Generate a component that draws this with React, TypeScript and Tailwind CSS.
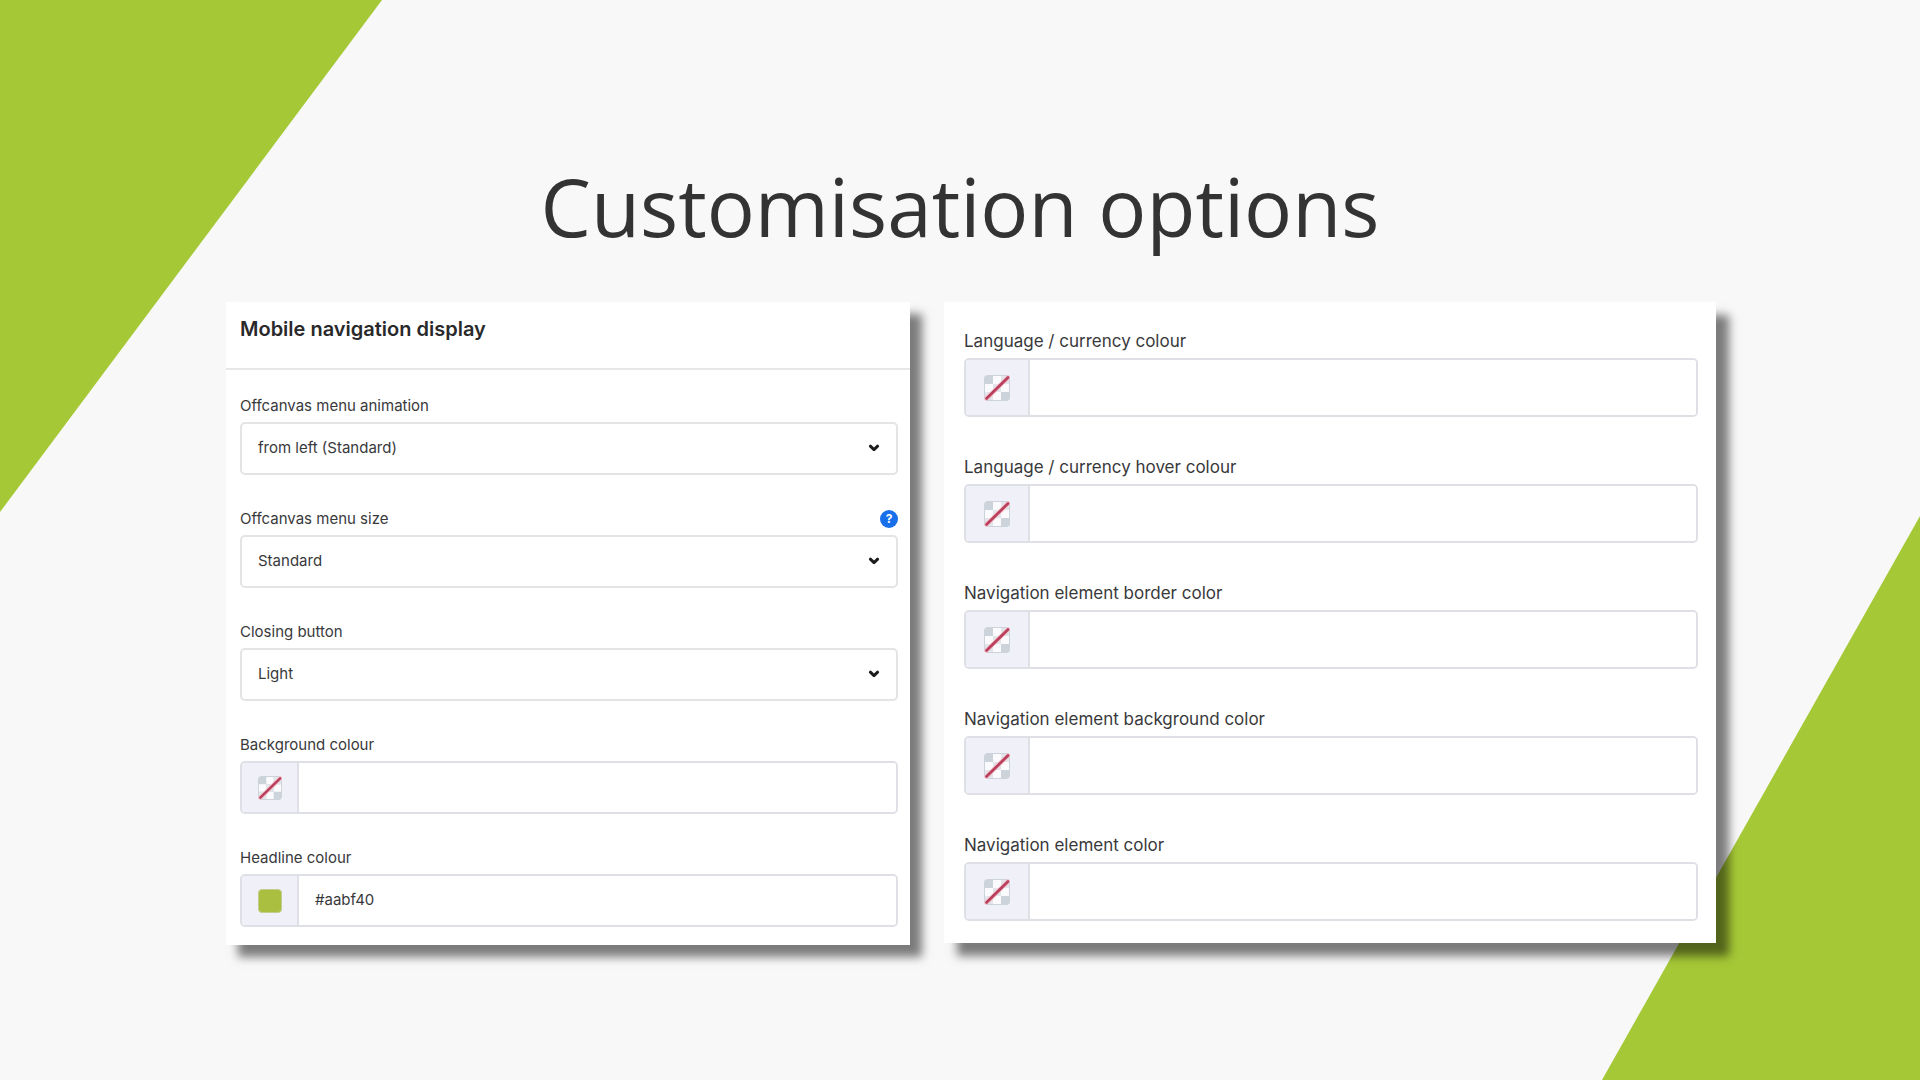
import { useState } from "react";

interface SelectFieldProps {
  id: string;
  label: string;
  options: string[];
  hasHelp?: boolean;
}

interface ColorFieldProps {
  id: string;
  label: string;
  initial?: string;
  size: "md" | "lg";
}

const SELECT_FIELDS: SelectFieldProps[] = [
  {
    id: "menu-animation",
    label: "Offcanvas menu animation",
    options: ["from left (Standard)", "from right"],
  },
  {
    id: "menu-size",
    label: "Offcanvas menu size",
    options: ["Standard", "Full width"],
    hasHelp: true,
  },
  { id: "closing-button", label: "Closing button", options: ["Light", "Dark"] },
];

const NAVIGATION_COLORS = [
  { id: "language-color", label: "Language / currency colour" },
  { id: "language-hover-color", label: "Language / currency hover colour" },
  { id: "nav-border-color", label: "Navigation element border color" },
  { id: "nav-background-color", label: "Navigation element background color" },
  { id: "nav-color", label: "Navigation element color" },
];

function Chevron() {
  return (
    <svg
      viewBox="0 0 12 8"
      className="pointer-events-none absolute right-[18px] top-[22px] h-2 w-3"
      fill="none"
      stroke="#1c1c1e"
      strokeWidth="3"
      strokeLinecap="round"
      strokeLinejoin="round"
    >
      <path d="M2.4 2.2 6 5.6l3.6-3.4" />
    </svg>
  );
}

function EmptySwatch({ className }: { className: string }) {
  return (
    <svg viewBox="0 0 26 26" className={className}>
      <rect width="26" height="26" rx="4" fill="#cdd3da" />
      <path
        d="M9 1h8v8H9zM1 9h8v8H1zM17 9h8v8h-8zM9 17h8v8H9z"
        fill="#fbfbfd"
      />
      <path
        d="M17 1h5a3 3 0 0 1 3 3v5h-8zM9 9h8v8H9zM1 17h8v8H4a3 3 0 0 1-3-3z"
        fill="#e2e5ea"
      />
      <path
        d="M2.5 23.5 24 2.5"
        stroke="#f3bcc8"
        strokeWidth="4.4"
        strokeLinecap="round"
      />
      <path
        d="M2.5 23.5 24 2.5"
        stroke="#b9405c"
        strokeWidth="2.6"
        strokeLinecap="round"
      />
    </svg>
  );
}

function SelectField({ id, label, options, hasHelp }: SelectFieldProps) {
  const [value, setValue] = useState(options[0]);

  return (
    <div>
      <div className="mb-1.5 flex h-5 items-center justify-between">
        <label htmlFor={id} className="text-[15px] leading-5">
          {label}
        </label>
        {hasHelp && (
          <button
            type="button"
            aria-label="Help"
            className="flex size-[18px] items-center justify-center rounded-full bg-[#176fea] text-[12px] font-bold leading-none text-white"
          >
            ?
          </button>
        )}
      </div>
      <div className="relative">
        <select
          id={id}
          value={value}
          onChange={(e) => setValue(e.target.value)}
          className="h-[53px] w-full appearance-none rounded-[5px] border-2 border-[#e3e4e6] bg-white px-4 text-[15px] outline-none focus:border-[#176fea]"
        >
          {options.map((option) => (
            <option key={option}>{option}</option>
          ))}
        </select>
        <Chevron />
      </div>
    </div>
  );
}

function ColorField({ id, label, initial = "", size }: ColorFieldProps) {
  const [value, setValue] = useState(initial);
  const isLarge = size === "lg";

  return (
    <div>
      <label
        htmlFor={id}
        className={`block leading-5 ${isLarge ? "mb-[7px] text-[17px]" : "mb-1.5 text-[15px]"}`}
      >
        {label}
      </label>
      <div
        className={`flex overflow-hidden rounded-[5px] border-2 border-[#dfe0e5] ${isLarge ? "h-[59px]" : "h-[53px]"}`}
      >
        <button
          type="button"
          aria-label={`Pick ${label}`}
          className={`flex shrink-0 items-center justify-center border-r-2 border-[#dfe0e5] bg-[#f0f1f8] ${isLarge ? "w-16" : "w-[57px]"}`}
        >
          {value ? (
            <span
              className="size-6 rounded-[4px] border border-[#c2cc8c]"
              style={{ backgroundColor: value }}
            />
          ) : (
            <EmptySwatch className={isLarge ? "size-[26px]" : "size-6"} />
          )}
        </button>
        <input
          id={id}
          type="text"
          value={value}
          onChange={(e) => setValue(e.target.value)}
          className="min-w-0 flex-1 bg-white px-4 text-[15px] outline-none"
        />
      </div>
    </div>
  );
}

export default function App() {
  return (
    <div className="relative min-h-screen overflow-hidden bg-[#f8f8f8]">
      <svg
        className="absolute left-0 top-0 h-[512px] w-[382px]"
        viewBox="0 0 382 512"
        aria-hidden="true"
      >
        <path d="M0 0h382L0 512z" fill="#a5c836" />
      </svg>
      <svg
        className="absolute bottom-0 right-0 h-[564px] w-[318px]"
        viewBox="0 0 318 564"
        aria-hidden="true"
      >
        <path d="M318 0v564H0z" fill="#a5c836" />
      </svg>

      <main className="relative pb-32 pl-[226px] pr-[204px] pt-[146px] font-['Inter',sans-serif] text-[#39393b]">
        <h1 className="-ml-[22px] mb-9 text-center font-['Open_Sans',sans-serif] text-[80px] leading-[120px] text-[#333333]">
          Customisation options
        </h1>

        <div className="grid grid-cols-[684fr_772fr] items-start gap-[34px]">
          <section className="bg-white shadow-[12px_12px_9px_rgba(0,0,0,0.5)]">
            <h2 className="border-b-2 border-[#e6e7e9] px-3.5 pb-[27px] pt-[15px] text-[20px] font-semibold leading-6 text-[#29292b]">
              Mobile navigation display
            </h2>
            <div className="flex flex-col gap-[34px] pb-[18px] pl-3.5 pr-3 pt-[26px]">
              {SELECT_FIELDS.map((field) => (
                <SelectField key={field.id} {...field} />
              ))}
              <ColorField
                id="background-color"
                label="Background colour"
                size="md"
              />
              <ColorField
                id="headline-color"
                label="Headline colour"
                initial="#aabf40"
                size="md"
              />
            </div>
          </section>

          <section className="flex flex-col gap-10 bg-white pb-[22px] pl-5 pr-[18px] pt-[29px] shadow-[13px_13px_9px_rgba(0,0,0,0.5)]">
            {NAVIGATION_COLORS.map((field) => (
              <ColorField key={field.id} {...field} size="lg" />
            ))}
          </section>
        </div>
      </main>
    </div>
  );
}
